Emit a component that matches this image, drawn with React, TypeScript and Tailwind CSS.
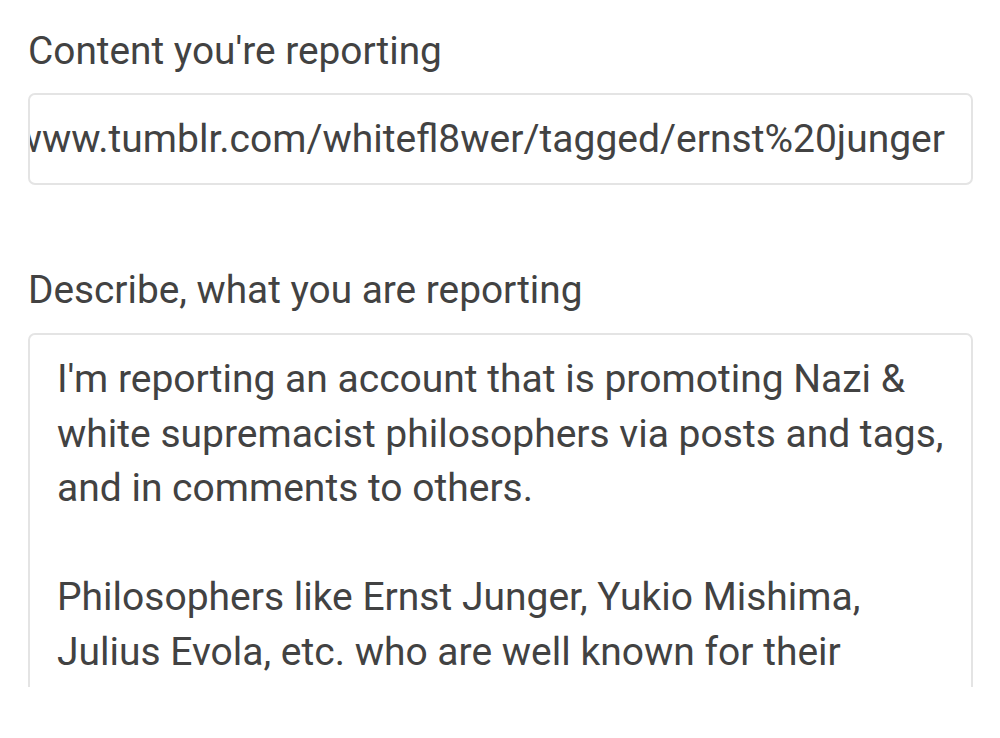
import React from "react";

const lines = [
  "I'm reporting an account that is promoting Nazi &",
  "white supremacist philosophers via posts and tags,",
  "and in comments to others.",
  "",
  "Philosophers like Ernst Junger, Yukio Mishima,",
  "Julius Evola, etc. who are well known for their",
];

export default function App() {
  return (
    <div className="w-[1000px] h-[738px] bg-white overflow-hidden" style={{ fontFamily: "Roboto, 'Noto Sans', sans-serif" }}>
      <div className="h-[687px] overflow-hidden pl-[28px] pr-[27px] text-[#424242]">
        <div className="pt-[29px] text-[38.8px] leading-[44px]">Content you're reporting</div>
        <div className="mt-[20px] h-[92px] border-2 border-[#e4e4e4] rounded-[7px] flex items-center justify-end overflow-hidden pl-[27px] pr-[26px]">
          <span className="whitespace-nowrap text-[39px] leading-[54px] shrink-0">https://www.tumblr.com/whitefl8wer/tagged/ernst%20junger</span>
        </div>
        <div className="mt-[83px] text-[38.8px] leading-[44px]">Describe, what you are reporting</div>
        <div className="mt-[21px] h-[420px] border-2 border-[#e4e4e4] rounded-[7px] pl-[27px] pr-[20px] pt-[17px]">
          {lines.map((l, i) => (
            <div key={i} className="text-[39px] leading-[54.5px] h-[54.5px] whitespace-nowrap">
              {l}
            </div>
          ))}
        </div>
      </div>
    </div>
  );
}
